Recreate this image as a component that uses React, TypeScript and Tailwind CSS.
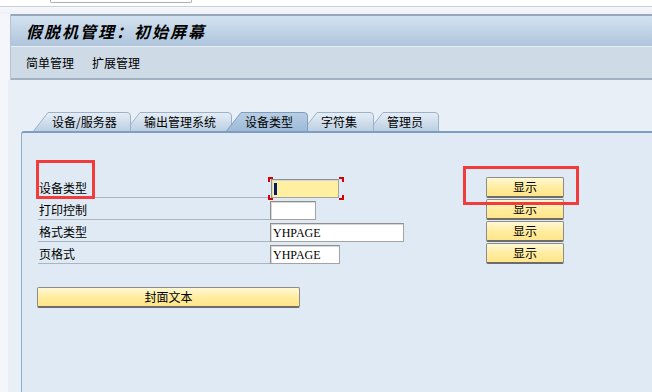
import React from 'react';

const tabs = [
  { label: '设备/服务器', w: 98 },
  { label: '输出管理系统', w: 107 },
  { label: '设备类型', w: 82, active: true },
  { label: '字符集', w: 72 },
  { label: '管理员', w: 71 },
];

const rows = [
  { label: '设备类型', value: '', w: 'w-[68px]', focus: true },
  { label: '打印控制', value: '', w: 'w-[46px]' },
  { label: '格式类型', value: 'YHPAGE', w: 'w-[134px]' },
  { label: '页格式', value: 'YHPAGE', w: 'w-[70px]' },
];

const Tab = ({ label, w, active, z }: { label: string; w: number; active?: boolean; z: number }) => {
  const h = 19;
  const fillTop = active ? '#b9cee4' : '#e6eef7';
  const fillBottom = active ? '#9dbad8' : '#bccfe2';
  const id = `tabgrad-${z}`;
  return (
    <div
      className="relative h-[19px] -ml-[6px] first:ml-0 shrink-0"
      style={{ width: w, zIndex: active ? 20 : z }}
    >
      <svg className="absolute inset-0" width={w} height={h} viewBox={`0 0 ${w} ${h}`}>
        <defs>
          <linearGradient id={id} x1="0" y1="0" x2="0" y2="1">
            <stop offset="0" stopColor={fillTop} />
            <stop offset="1" stopColor={fillBottom} />
          </linearGradient>
        </defs>
        <path
          d={`M0.5 ${h} L15 0.5 L${w - 4} 0.5 Q${w - 0.5} 0.5 ${w - 0.5} 4 L${w - 0.5} ${h}`}
          fill={`url(#${id})`}
          stroke={active ? '#7f9dbd' : '#9db2c8'}
          strokeWidth="1"
        />
      </svg>
      <span className="relative block pl-[19px] pt-[2px] text-[12px] leading-[16px] text-black whitespace-nowrap">
        {label}
      </span>
    </div>
  );
};

const YellowButton = ({ children, className }: { children: React.ReactNode; className: string }) => (
  <button
    className={`${className} flex items-center justify-center rounded-[2px] border border-[#8c8c8c] border-b-2 border-b-[#6c6c6c] bg-gradient-to-b from-[#fff8d4] via-[#ffeda0] to-[#ffe58a] text-[12px] leading-none text-black`}
  >
    {children}
  </button>
);

const Corner = ({ className }: { className: string }) => (
  <span className={`absolute w-[5px] h-[5px] border-[#d40000] ${className}`} />
);

export default function App() {
  return (
    <div
      className="relative w-[652px] h-[392px] overflow-hidden bg-[#f4f6fa]"
      style={{ fontFamily: '"Noto Sans CJK SC", "Liberation Sans", sans-serif' }}
    >
      {/* command field edge */}
      <div className="h-[6px] bg-white">
        <div className="ml-[50px] w-[142px] h-[3px] border-x border-b border-[#a9b0b8] rounded-b-[2px] bg-white" />
      </div>
      <div className="h-px bg-[#c9d0d9]" />
      <div className="h-[7px] bg-gradient-to-b from-[#f6f8fb] to-[#edf1f7]" />

      {/* header */}
      <div className="ml-[10px] border-l border-[#b4c2d1]">
        <div className="h-[32px] border-t-2 border-[#97a6b8] bg-gradient-to-b from-[#d3e2f0] to-[#afc5dc] pl-[15px] flex items-center">
          <span className="text-[16px] font-bold italic tracking-[2px] text-black leading-none">
            假脱机管理：初始屏幕
          </span>
        </div>
        <div className="h-[34px] border-t border-[#e8eff6] border-b-2 border-b-[#a3b2c2] bg-[#cedbe6] pl-[15px] flex items-center gap-[18px] text-[12px] text-black">
          <span>简单管理</span>
          <span>扩展管理</span>
        </div>
      </div>

      {/* body */}
      <div className="ml-[8px] h-[313px] bg-[#e8eff7] pt-[32px]">
        <div className="flex pl-[25px]">
          {tabs.map((t, i) => (
            <Tab key={t.label} label={t.label} w={t.w} active={t.active} z={10 - i} />
          ))}
        </div>
        <div className="ml-[13px] h-[262px] rounded-tl-[3px] border-l border-t-2 border-l-[#94adc6] border-t-[#7e9dbf] bg-[#dfeaf4] pl-[16px] pt-[43px]">
          <div className="flex flex-col">
            {rows.map((r) => (
              <div key={r.label} className="flex h-[22px] items-end">
                <div className="w-[232px] h-[22px] border-b border-[#a9b5c1] flex items-end pl-[1px] text-[12px] leading-[18px] text-black">
                  {r.label}
                </div>
                <div className="relative w-[216px] h-[22px] flex items-end">
                  <div
                    className={`${r.w} h-[19px] border border-[#a3a3a3] border-t-[#8e8e8e] border-l-[#8e8e8e] shadow-[inset_1px_1px_0_#d8d8d8] ${
                      r.focus ? 'ml-[1px] bg-[#ffefa0]' : 'bg-white'
                    } flex items-center pl-[2px] text-[12px] leading-none text-black`}
                    style={{ fontFamily: '"Liberation Serif", serif' }}
                  >
                    {r.focus ? <span className="w-[3px] h-[12px] bg-[#0a1a5c]" /> : r.value}
                  </div>
                  {r.focus && (
                    <>
                      <Corner className="left-[-2px] top-[1px] border-l-2 border-t-2" />
                      <Corner className="left-[69px] top-[1px] border-r-2 border-t-2" />
                      <Corner className="left-[-2px] bottom-[-2px] border-l-2 border-b-2" />
                      <Corner className="left-[69px] bottom-[-2px] border-r-2 border-b-2" />
                    </>
                  )}
                </div>
                <YellowButton className="w-[78px] h-[21px] self-center">显示</YellowButton>
              </div>
            ))}
          </div>
          <YellowButton className="mt-[23px] -ml-[1px] w-[263px] h-[21px]">封面文本</YellowButton>
        </div>
      </div>

      {/* annotation boxes */}
      <div className="absolute left-[36px] top-[160px] w-[59px] h-[39px] border-[3px] border-[#f23c3c]" />
      <div className="absolute left-[463px] top-[166px] w-[116px] h-[39px] border-[3px] border-[#f23c3c]" />
    </div>
  );
}
